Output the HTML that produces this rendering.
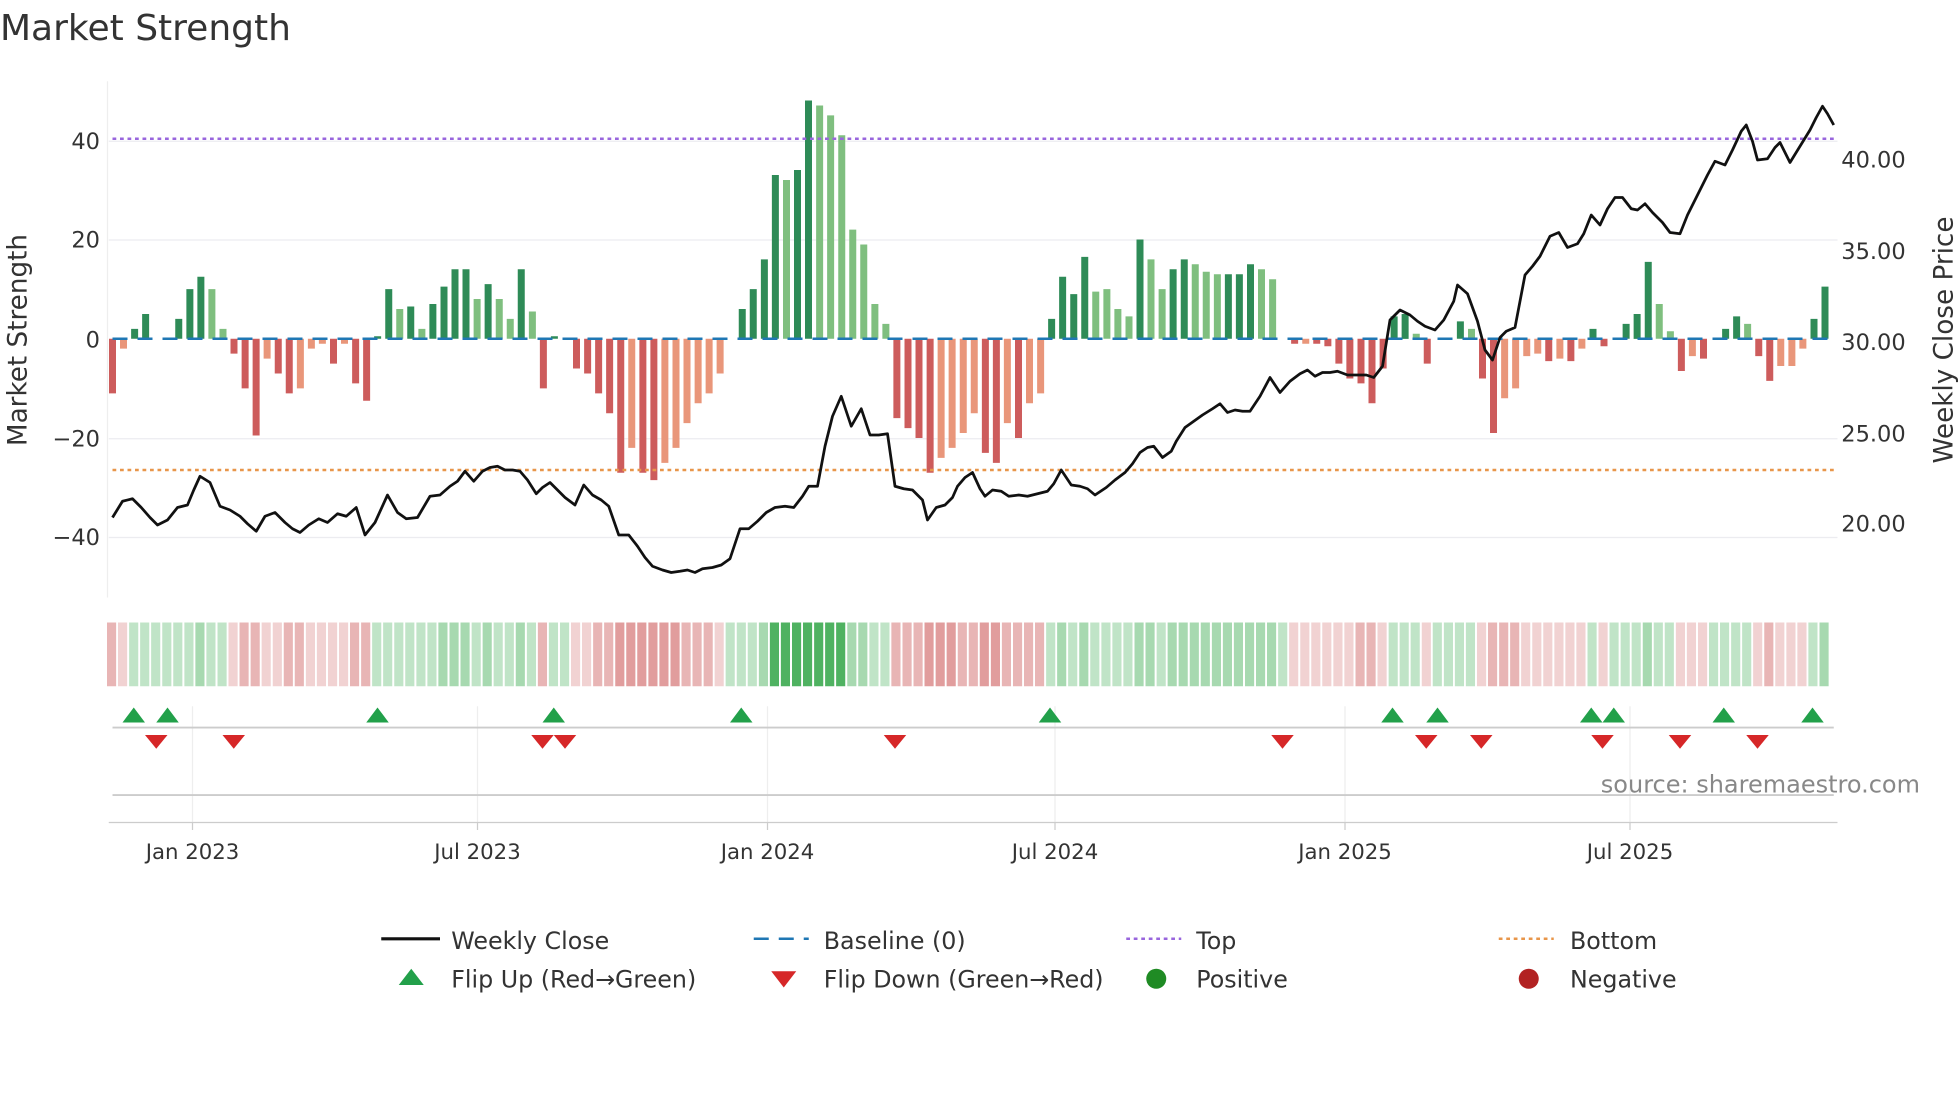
<!DOCTYPE html>
<html><head><meta charset="utf-8"><style>
html,body{margin:0;padding:0;background:#fff;}
svg{display:block;font-family:"DejaVu Sans","Liberation Sans",sans-serif;}
</style></head><body>
<svg id="c" width="1960" height="1102" viewBox="0 0 1568 881.6" xmlns="http://www.w3.org/2000/svg">
<rect width="1568" height="882" fill="#fff"/>
<text x="0" y="32" font-size="28.8" fill="#333">Market Strength</text>
<g stroke="#ececf0" stroke-width="1">
<line x1="87" x2="1470" y1="113" y2="113"/><line x1="87" x2="1470" y1="192" y2="192"/>
<line x1="87" x2="1470" y1="351" y2="351"/><line x1="87" x2="1470" y1="430" y2="430"/>
</g>
<line x1="86" x2="86" y1="65" y2="478" stroke="#eee"/>
<g font-size="18" fill="#333" text-anchor="end">
<text x="80" y="119">40</text><text x="80" y="198">20</text><text x="80" y="278">0</text>
<text x="80" y="357">−20</text><text x="80" y="436">−40</text>
</g>
<g font-size="18" fill="#333">
<text x="1473" y="134">40.00</text><text x="1473" y="207">35.00</text><text x="1473" y="280">30.00</text>
<text x="1473" y="353">25.00</text><text x="1473" y="425">20.00</text>
</g>
<text transform="translate(21,272) rotate(-90)" font-size="21" fill="#333" text-anchor="middle">Market Strength</text>
<text transform="translate(1562,272) rotate(-90)" font-size="21" fill="#333" text-anchor="middle">Weekly Close Price</text>
<g id="bars"></g>
<line x1="90" x2="1468" y1="271" y2="271" stroke="#1f77b4" stroke-width="2" stroke-dasharray="12,8"/>
<line x1="90" x2="1468" y1="111" y2="111" stroke="#9966dd" stroke-width="2" stroke-dasharray="3,3"/>
<line x1="90" x2="1468" y1="376" y2="376" stroke="#e8964a" stroke-width="2" stroke-dasharray="3,3"/>
<polyline id="price" fill="none" stroke="#111" stroke-width="2.2" stroke-linejoin="round"/>
<g id="strip"></g>
<g stroke="#eee"><line x1="154" x2="154" y1="565" y2="658"/><line x1="382" x2="382" y1="565" y2="658"/><line x1="614" x2="614" y1="565" y2="658"/><line x1="844" x2="844" y1="565" y2="658"/><line x1="1076" x2="1076" y1="565" y2="658"/><line x1="1304" x2="1304" y1="565" y2="658"/></g>
<line x1="90" x2="1467" y1="582" y2="582" stroke="#ccc" stroke-width="1.5"/>
<line x1="90" x2="1467" y1="636" y2="636" stroke="#ccc" stroke-width="1.5"/>
<line x1="87" x2="1470" y1="658" y2="658" stroke="#ccc" stroke-width="1"/>
<g id="marks"></g>
<text x="1536" y="634" font-size="19.2" fill="#888" text-anchor="end">source: sharemaestro.com</text>
<g font-size="17" fill="#333" text-anchor="middle">
<text x="154" y="687">Jan 2023</text><text x="382" y="687">Jul 2023</text><text x="614" y="687">Jan 2024</text>
<text x="844" y="687">Jul 2024</text><text x="1076" y="687">Jan 2025</text><text x="1304" y="687">Jul 2025</text>
</g>
<g stroke="#ccc"><line x1="154" x2="154" y1="658" y2="664"/><line x1="382" x2="382" y1="658" y2="664"/><line x1="614" x2="614" y1="658" y2="664"/><line x1="844" x2="844" y1="658" y2="664"/><line x1="1076" x2="1076" y1="658" y2="664"/><line x1="1304" x2="1304" y1="658" y2="664"/></g>
<g font-size="19" fill="#333">
<line x1="305" x2="352" y1="751" y2="751" stroke="#111" stroke-width="2.5"/><text x="361" y="759">Weekly Close</text>
<line x1="603" x2="647" y1="751" y2="751" stroke="#1f77b4" stroke-width="2" stroke-dasharray="12,8"/><text x="659" y="759">Baseline (0)</text>
<line x1="901" x2="945" y1="751" y2="751" stroke="#9966dd" stroke-width="2" stroke-dasharray="3,3"/><text x="957" y="759">Top</text>
<line x1="1199" x2="1243" y1="751" y2="751" stroke="#e8964a" stroke-width="2" stroke-dasharray="3,3"/><text x="1256" y="759">Bottom</text>
<polygon points="319,788 329,775 339,788" fill="#22a04a"/><text x="361" y="790">Flip Up (Red→Green)</text>
<polygon points="617,777 637,777 627,790" fill="#d62728"/><text x="659" y="790">Flip Down (Green→Red)</text>
<circle cx="925" cy="783" r="8" fill="#1f8b24"/><text x="957" y="790">Positive</text>
<circle cx="1223" cy="783" r="8" fill="#b22222"/><text x="1256" y="790">Negative</text>
</g>
</svg>
<script>
var d="R11 r2 G2 G5 G0 G0 G4 G10 G12.5 g10 g2 R3 R10 R19.5 r4 R7 R11 r10 r2 r1 R5 r1 R9 R12.5 G0.5 G10 g6 G6.5 g2 G7 G10.5 G14 G14 g8 G11 g8 g4 G14 g5.5 R10 G0.5 G0 R6 R7 R11 R15 R27 r22 R27 R28.5 r25 r22 r17 r13 r11 r7 G0 G6 G10 G16 G33 g32 G34 G48 g47 g45 g41 g22 g19 g7 g3 R16 R18 R20 R27 r24 r22 r19 r15 R23 R25 r17 R20 r13 r11 G4 G12.5 G9 G16.5 g9.5 g10 g6 g4.5 G20 g16 g10 G14 G16 g15 g13.5 g13 G13 G13 G15 g14 g12 G0 R1 r1 R1 R1.5 R5 R8 R9 R13 R6 G4.5 G5 g1 R5 G0 G0 G3.5 g2 R8 R19 r12 r10 r3.5 r3 R4.5 r4 R4.5 r2 G2 R1.5 G0 G3 G5 G15.5 g7 g1.5 R6.5 r3.5 R4 G0 G2 G4.5 g3 R3.5 R8.5 r5.5 r5.5 r2 G4 G10.5".split(" ");
var col={G:"#2e8b57",g:"#7fbf7f",R:"#cd5c5c",r:"#e9967a"},s="",st="";
var n=d.length,step=(1460-90)/(n-1);
d.forEach(function(t,i){var c=t[0],v=parseFloat(t.slice(1)),x=90+i*step,h=v*3.97;
 if(v>0){s+='<rect x="'+(x-2.8).toFixed(1)+'" y="'+(c=="R"||c=="r"?271:271-h).toFixed(1)+'" width="5.6" height="'+h.toFixed(1)+'" fill="'+col[c]+'"/>';}
 var pos=(c=="G"||c=="g");
 var fill=pos?"rgba(60,170,80,"+(v>30?0.9:v>10?0.45:0.32)+")":"rgba(205,92,92,"+(v>20?0.6:v>8?0.45:0.28)+")";
 st+='<rect x="'+(x-step/2).toFixed(1)+'" y="498" width="'+(step-1.5).toFixed(1)+'" height="51" fill="'+fill+'"/>';});
document.getElementById("bars").innerHTML=s;document.getElementById("strip").innerHTML=st;
document.getElementById("price").setAttribute("points","90,414 98,401 106,399 113,406 120,414 126,420 134,416 142,406 150,404 155,392 160,381 168,386 176,405 184,408 192,413 198,419 205,425 212,413 220,410 228,418 234,423 240,426 247,420 255,415 262,418 270,411 277,413 285,406 292,428 300,418 310,396 318,410 325,415 334,414 344,397 352,396 360,389 366,385 372,377 379,385 386,377 392,374 398,373 404,376 410,376 416,377 422,384 429,395 434,390 440,386 446,392 452,398 460,404 467,388 474,396 481,400 487,405 495,428 503,428 510,437 516,446 522,453 530,456 537,458 544,457 550,456 556,458 562,455 570,454 577,452 584,447 592,423 599,423 606,417 613,410 620,406 628,405 635,406 642,397 647,389 654,389 660,357 666,333 673,317 681,341 689,327 696,348 703,348 710,347 716,389 723,391 730,392 738,400 742,416 749,406 756,404 762,398 766,389 772,382 778,378 784,391 788,397 794,392 801,393 807,397 815,396 822,397 830,395 838,393 843,387 849,376 857,388 864,389 870,391 876,396 885,390 892,384 900,378 906,371 912,362 918,358 923,357 930,366 937,361 941,353 948,342 955,337 962,332 970,327 976,323 982,330 988,328 994,329 1000,329 1008,317 1016,302 1024,314 1032,305 1040,299 1046,296 1052,301 1058,298 1064,298 1070,297 1078,300 1086,300 1093,300 1099,302 1106,293 1112,256 1120,248 1128,252 1134,257 1140,261 1148,264 1155,256 1163,241 1166,228 1174,235 1182,257 1188,280 1194,288 1200,270 1205,265 1212,262 1220,220 1226,213 1232,205 1240,189 1247,186 1254,198 1262,195 1267,187 1273,172 1280,180 1286,167 1292,158 1298,158 1305,167 1310,168 1316,163 1322,170 1330,178 1336,186 1344,187 1350,172 1358,156 1366,140 1372,129 1380,132 1386,120 1393,105 1397,100 1402,113 1406,128 1414,127 1420,118 1424,114 1432,130 1440,117 1448,104 1453,94 1458,85 1462,91 1467,100");
var m="";[107,134,302,443,593,840,1114,1150,1273,1291,1379,1450].forEach(function(x){m+='<polygon points="'+(x-9)+',578 '+x+',566 '+(x+9)+',578" fill="#22a04a"/>';});
[125,187,434,452,716,1026,1141,1185,1282,1344,1406].forEach(function(x){m+='<polygon points="'+(x-9)+',588 '+(x+9)+',588 '+x+',599" fill="#d62728"/>';});
document.getElementById("marks").innerHTML=m;
</script>
</body></html>
